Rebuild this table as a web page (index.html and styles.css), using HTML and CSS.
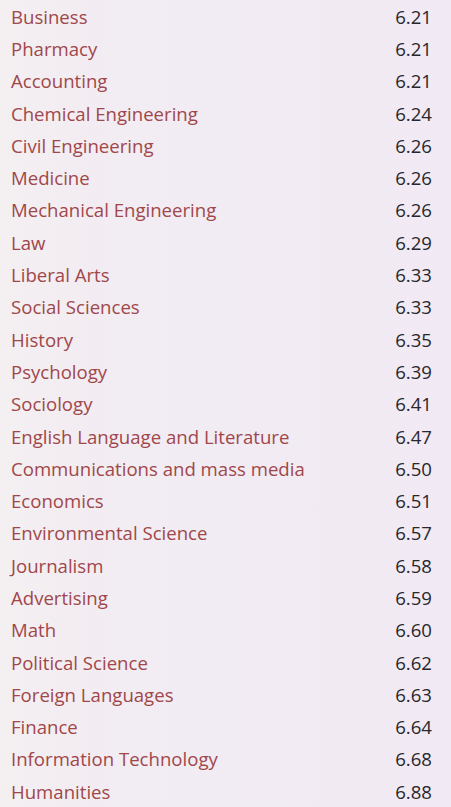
FILE: index.html
```html
<!DOCTYPE html>
<html>
<head>
<meta charset="utf-8">
<link rel="stylesheet" href="styles.css">
</head>
<body>
<div class="table">
  <div class="row"><span class="name">Business</span><span class="val">6.21</span></div>
  <div class="row"><span class="name">Pharmacy</span><span class="val">6.21</span></div>
  <div class="row"><span class="name">Accounting</span><span class="val">6.21</span></div>
  <div class="row"><span class="name">Chemical Engineering</span><span class="val">6.24</span></div>
  <div class="row"><span class="name">Civil Engineering</span><span class="val">6.26</span></div>
  <div class="row"><span class="name">Medicine</span><span class="val">6.26</span></div>
  <div class="row"><span class="name">Mechanical Engineering</span><span class="val">6.26</span></div>
  <div class="row"><span class="name">Law</span><span class="val">6.29</span></div>
  <div class="row"><span class="name">Liberal Arts</span><span class="val">6.33</span></div>
  <div class="row"><span class="name">Social Sciences</span><span class="val">6.33</span></div>
  <div class="row"><span class="name">History</span><span class="val">6.35</span></div>
  <div class="row"><span class="name">Psychology</span><span class="val">6.39</span></div>
  <div class="row"><span class="name">Sociology</span><span class="val">6.41</span></div>
  <div class="row"><span class="name">English Language and Literature</span><span class="val">6.47</span></div>
  <div class="row"><span class="name">Communications and mass media</span><span class="val">6.50</span></div>
  <div class="row"><span class="name">Economics</span><span class="val">6.51</span></div>
  <div class="row"><span class="name">Environmental Science</span><span class="val">6.57</span></div>
  <div class="row"><span class="name">Journalism</span><span class="val">6.58</span></div>
  <div class="row"><span class="name">Advertising</span><span class="val">6.59</span></div>
  <div class="row"><span class="name">Math</span><span class="val">6.60</span></div>
  <div class="row"><span class="name">Political Science</span><span class="val">6.62</span></div>
  <div class="row"><span class="name">Foreign Languages</span><span class="val">6.63</span></div>
  <div class="row"><span class="name">Finance</span><span class="val">6.64</span></div>
  <div class="row"><span class="name">Information Technology</span><span class="val">6.68</span></div>
  <div class="row"><span class="name">Humanities</span><span class="val">6.88</span></div>
</div>
</body>
</html>
```

FILE: styles.css
```css
html, body {
  margin: 0;
  padding: 0;
}
body {
  background: #f1ebf3;
  width: 451px;
  height: 807px;
  overflow: hidden;
  font-family: "Open Sans", "Noto Sans", sans-serif;
}
.table {
  display: flex;
  flex-direction: column;
  padding: 0 19px 0 11px;
  background: linear-gradient(to right, #f4eff1 0, #f2ecf3 120px, #f1eaf4 451px);
}
.row {
  height: 32.3px;
  display: flex;
  justify-content: space-between;
  align-items: center;
  font-size: 18.6px;
}
.name {
  color: #a0474a;
  letter-spacing: 0;
}
.val {
  color: #29272c;
  letter-spacing: 0;
}
```
